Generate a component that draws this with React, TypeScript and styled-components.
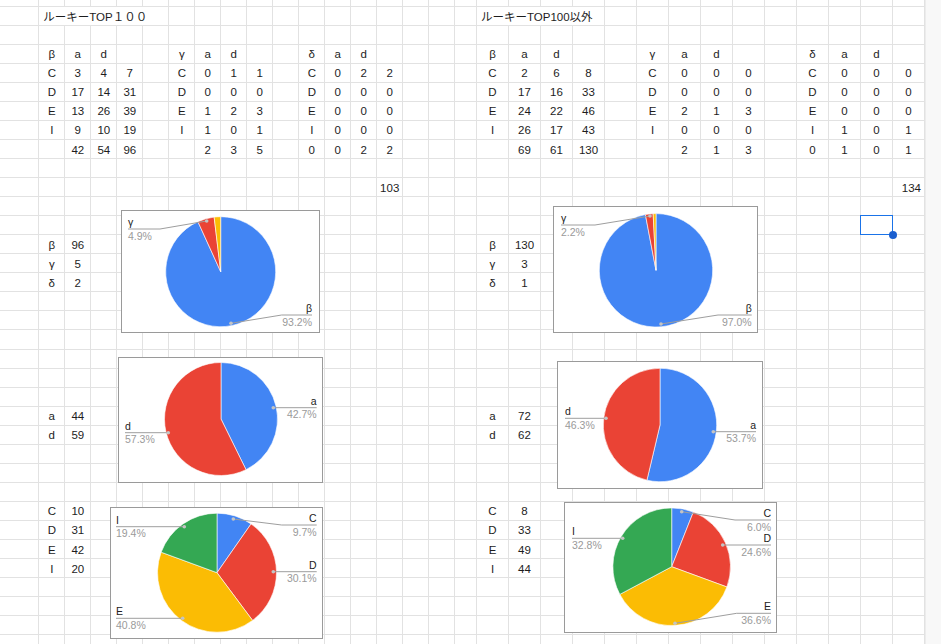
import React from 'react';
import styled, { createGlobalStyle } from 'styled-components';

const GlobalStyle = createGlobalStyle`
  html, body {
    margin: 0;
    padding: 0;
    background: #fff;
  }
  body {
    font-family: "Liberation Sans", Arial, "Noto Sans CJK JP", sans-serif;
  }
`;

const ROW_TOP = 6.7;
const ROW_H = 19.06;
const ROW_COUNT = 34;

const COLORS = {
  blue: '#4285f4',
  red: '#ea4335',
  yellow: '#fbbc04',
  green: '#34a853',
};

type Align = 'l' | 'c' | 'r';
type CellSpec = { t: string; a?: Align; span?: number; sel?: boolean };
type SheetData = Record<string, CellSpec>;

const Page = styled.div`
  position: relative;
  display: flex;
  width: 941px;
  height: 644px;
  overflow: hidden;
  background: #fff;
`;

const Pane = styled.div<{ $cols: string }>`
  flex: none;
  display: grid;
  grid-template-columns: ${(p) => p.$cols};
  grid-template-rows: ${ROW_TOP}px repeat(${ROW_COUNT}, ${ROW_H}px);
  align-content: start;
`;

const Cell = styled.div<{ $align: Align; $span: number; $sel?: boolean }>`
  grid-column: span ${(p) => p.$span};
  position: relative;
  box-sizing: border-box;
  min-height: 0;
  display: flex;
  align-items: center;
  justify-content: ${(p) => (p.$align === 'l' ? 'flex-start' : p.$align === 'r' ? 'flex-end' : 'center')};
  padding: 1px ${(p) => (p.$align === 'l' ? 4 : 3)}px 0;
  border-right: 1px solid #e2e2e2;
  border-bottom: 1px solid #e2e2e2;
  font-size: 11.5px;
  color: #1d1d1d;
  white-space: nowrap;

  ${(p) =>
    p.$sel &&
    `
    &::after {
      content: '';
      position: absolute;
      inset: -1px -1px -1px -1px;
      border: 1.5px solid #1a73e8;
    }
  `}
`;

const Handle = styled.span`
  position: absolute;
  right: -5px;
  bottom: -5px;
  width: 8px;
  height: 8px;
  border-radius: 50%;
  background: #1a5fcf;
  z-index: 2;
`;

const ScrollStrip = styled.div`
  flex: 1;
  background: #f8f8f8;
  border-left: 1px solid #ececec;
`;

const ChartFrame = styled.div<{ $x: number; $y: number; $w: number; $h: number }>`
  position: absolute;
  left: ${(p) => p.$x}px;
  top: ${(p) => p.$y}px;
  width: ${(p) => p.$w - 2}px;
  height: ${(p) => p.$h - 2}px;
  border: 1px solid #9a9a9a;
  background: #fff;

  svg {
    display: block;
  }
`;

const LabelName = styled.text`
  font-family: "Liberation Sans", Arial, sans-serif;
  font-size: 10.5px;
  fill: #222;
`;

const LabelPct = styled.text`
  font-family: "Liberation Sans", Arial, sans-serif;
  font-size: 10.5px;
  fill: #9a9a9a;
`;

/* ---------- sheet data ---------- */

const left: SheetData = {};
const right: SheetData = {};

function putRow(d: SheetData, r: number, c: number, vals: string[]) {
  vals.forEach((v, i) => {
    if (v !== '') d[`${r},${c + i}`] = { t: v };
  });
}

function putTable(d: SheetData, r: number, c: number, rows: string[][]) {
  rows.forEach((vals, i) => putRow(d, r + i, c, vals));
}

left['1,1'] = { t: 'ルーキーTOP１００', a: 'l', span: 5 };
putTable(left, 3, 1, [
  ['β', 'a', 'd', ''],
  ['C', '3', '4', '7'],
  ['D', '17', '14', '31'],
  ['E', '13', '26', '39'],
  ['I', '9', '10', '19'],
  ['', '42', '54', '96'],
]);
putTable(left, 3, 6, [
  ['γ', 'a', 'd', ''],
  ['C', '0', '1', '1'],
  ['D', '0', '0', '0'],
  ['E', '1', '2', '3'],
  ['I', '1', '0', '1'],
  ['', '2', '3', '5'],
]);
putTable(left, 3, 11, [
  ['δ', 'a', 'd', ''],
  ['C', '0', '2', '2'],
  ['D', '0', '0', '0'],
  ['E', '0', '0', '0'],
  ['I', '0', '0', '0'],
  ['0', '0', '2', '2'],
]);
left['10,14'] = { t: '103', a: 'r' };
putTable(left, 13, 1, [['β', '96'], ['γ', '5'], ['δ', '2']]);
putTable(left, 22, 1, [['a', '44'], ['d', '59']]);
putTable(left, 27, 1, [['C', '10'], ['D', '31'], ['E', '42'], ['I', '20']]);

right['1,0'] = { t: 'ルーキーTOP100以外', a: 'l', span: 4 };
putTable(right, 3, 0, [
  ['β', 'a', 'd', ''],
  ['C', '2', '6', '8'],
  ['D', '17', '16', '33'],
  ['E', '24', '22', '46'],
  ['I', '26', '17', '43'],
  ['', '69', '61', '130'],
]);
putTable(right, 3, 5, [
  ['γ', 'a', 'd', ''],
  ['C', '0', '0', '0'],
  ['D', '0', '0', '0'],
  ['E', '2', '1', '3'],
  ['I', '0', '0', '0'],
  ['', '2', '1', '3'],
]);
putTable(right, 3, 10, [
  ['δ', 'a', 'd', ''],
  ['C', '0', '0', '0'],
  ['D', '0', '0', '0'],
  ['E', '0', '0', '0'],
  ['I', '1', '0', '1'],
  ['0', '1', '0', '1'],
]);
right['10,13'] = { t: '134', a: 'r' };
right['12,12'] = { t: '', sel: true };
putTable(right, 13, 0, [['β', '130'], ['γ', '3'], ['δ', '1']]);
putTable(right, 22, 0, [['a', '72'], ['d', '62']]);
putTable(right, 27, 0, [['C', '8'], ['D', '33'], ['E', '49'], ['I', '44']]);

function SheetPane({ cols, colCount, data }: { cols: string; colCount: number; data: SheetData }) {
  const cells: React.ReactNode[] = [];
  for (let r = 0; r <= ROW_COUNT; r++) {
    for (let c = 0; c < colCount; ) {
      const spec = data[`${r},${c}`];
      const span = spec?.span ?? 1;
      cells.push(
        <Cell key={`${r}-${c}`} $span={span} $align={spec?.a ?? 'c'} $sel={spec?.sel}>
          {spec?.t}
          {spec?.sel && <Handle />}
        </Cell>
      );
      c += span;
    }
  }
  return <Pane $cols={cols}>{cells}</Pane>;
}

/* ---------- charts ---------- */

type Label = {
  name: string;
  pct: string;
  side: 'l' | 'r';
  textX: number;
  lineY: number;
  dot: [number, number];
  kinkX?: number;
};

type Chart = {
  box: [number, number, number, number];
  cx: number;
  cy: number;
  r: number;
  slices: { v: number; color: string }[];
  labels: Label[];
};

const charts: Chart[] = [
  {
    box: [121, 210, 199, 123],
    cx: 220.7,
    cy: 271.7,
    r: 55,
    slices: [
      { v: 93.2, color: COLORS.blue },
      { v: 4.9, color: COLORS.red },
      { v: 1.9, color: COLORS.yellow },
    ],
    labels: [
      { name: 'γ', pct: '4.9%', side: 'l', textX: 128, lineY: 229, kinkX: 160, dot: [206.7, 221] },
      { name: 'β', pct: '93.2%', side: 'r', textX: 312, lineY: 315, kinkX: 281.7, dot: [231, 323.3] },
    ],
  },
  {
    box: [118, 357, 205, 126],
    cx: 221,
    cy: 419,
    r: 56.5,
    slices: [
      { v: 42.7, color: COLORS.blue },
      { v: 57.3, color: COLORS.red },
    ],
    labels: [
      { name: 'a', pct: '42.7%', side: 'r', textX: 316.7, lineY: 407.7, dot: [273.3, 407.7] },
      { name: 'd', pct: '57.3%', side: 'l', textX: 125, lineY: 432.7, dot: [168.3, 432.7] },
    ],
  },
  {
    box: [110, 507, 213, 132],
    cx: 217,
    cy: 572.7,
    r: 59.5,
    slices: [
      { v: 9.7, color: COLORS.blue },
      { v: 30.1, color: COLORS.red },
      { v: 40.8, color: COLORS.yellow },
      { v: 19.4, color: COLORS.green },
    ],
    labels: [
      { name: 'C', pct: '9.7%', side: 'r', textX: 316.7, lineY: 525, kinkX: 281.7, dot: [233.3, 519] },
      { name: 'D', pct: '30.1%', side: 'r', textX: 316.7, lineY: 571.7, dot: [273.3, 571.7] },
      { name: 'I', pct: '19.4%', side: 'l', textX: 116, lineY: 526.7, dot: [184.3, 526.7] },
      { name: 'E', pct: '40.8%', side: 'l', textX: 116, lineY: 618.3, dot: [182.7, 618.3] },
    ],
  },
  {
    box: [553, 206, 205, 127],
    cx: 656,
    cy: 270.3,
    r: 56.7,
    slices: [
      { v: 97.0, color: COLORS.blue },
      { v: 2.2, color: COLORS.red },
      { v: 0.8, color: COLORS.yellow },
    ],
    labels: [
      { name: 'γ', pct: '2.2%', side: 'l', textX: 561, lineY: 225, kinkX: 595, dot: [650, 216] },
      { name: 'β', pct: '97.0%', side: 'r', textX: 751.7, lineY: 315, kinkX: 718, dot: [661, 324] },
    ],
  },
  {
    box: [557, 361, 206, 128],
    cx: 660,
    cy: 425,
    r: 56.7,
    slices: [
      { v: 53.7, color: COLORS.blue },
      { v: 46.3, color: COLORS.red },
    ],
    labels: [
      { name: 'd', pct: '46.3%', side: 'l', textX: 565, lineY: 418.3, dot: [606, 418.3] },
      { name: 'a', pct: '53.7%', side: 'r', textX: 756, lineY: 431.7, dot: [713.3, 431.7] },
    ],
  },
  {
    box: [564, 502, 213, 131],
    cx: 671.7,
    cy: 566.7,
    r: 58.8,
    slices: [
      { v: 6.0, color: COLORS.blue },
      { v: 24.6, color: COLORS.red },
      { v: 36.6, color: COLORS.yellow },
      { v: 32.8, color: COLORS.green },
    ],
    labels: [
      { name: 'C', pct: '6.0%', side: 'r', textX: 771, lineY: 520, kinkX: 735, dot: [681.7, 511.7] },
      { name: 'D', pct: '24.6%', side: 'r', textX: 771, lineY: 545, dot: [722.7, 545] },
      { name: 'I', pct: '32.8%', side: 'l', textX: 572, lineY: 538.3, dot: [622.7, 538.3] },
      { name: 'E', pct: '36.6%', side: 'r', textX: 771, lineY: 613.3, kinkX: 736.7, dot: [675, 623.3] },
    ],
  },
];

function slicePath(cx: number, cy: number, r: number, f0: number, f1: number) {
  const t0 = f0 * Math.PI * 2 - Math.PI / 2;
  const t1 = f1 * Math.PI * 2 - Math.PI / 2;
  const x0 = cx + r * Math.cos(t0);
  const y0 = cy + r * Math.sin(t0);
  const x1 = cx + r * Math.cos(t1);
  const y1 = cy + r * Math.sin(t1);
  const large = f1 - f0 > 0.5 ? 1 : 0;
  return `M${cx},${cy} L${x0},${y0} A${r},${r} 0 ${large} 1 ${x1},${y1} Z`;
}

function PieLabel({ l }: { l: Label }) {
  const kink = l.kinkX ?? l.dot[0];
  const anchor = l.side === 'r' ? 'end' : 'start';
  return (
    <g>
      <polyline
        points={`${l.dot[0]},${l.dot[1]} ${kink},${l.lineY} ${l.textX},${l.lineY}`}
        fill="none"
        stroke="#9e9e9e"
        strokeWidth={1}
      />
      <circle cx={l.dot[0]} cy={l.dot[1]} r={1.8} fill="#c4c4c4" />
      <LabelName x={l.textX} y={l.lineY - 3} textAnchor={anchor}>
        {l.name}
      </LabelName>
      <LabelPct x={l.textX} y={l.lineY + 10.5} textAnchor={anchor}>
        {l.pct}
      </LabelPct>
    </g>
  );
}

function PieChart({ chart }: { chart: Chart }) {
  const [x, y, w, h] = chart.box;
  const total = chart.slices.reduce((s, v) => s + v.v, 0);
  let acc = 0;
  return (
    <ChartFrame $x={x} $y={y} $w={w} $h={h}>
      <svg width={w - 2} height={h - 2} viewBox={`${x + 1} ${y + 1} ${w - 2} ${h - 2}`}>
        {chart.slices.map((s, i) => {
          const f0 = acc / total;
          acc += s.v;
          const f1 = acc / total;
          return (
            <path
              key={i}
              d={slicePath(chart.cx, chart.cy, chart.r, f0, f1)}
              fill={s.color}
              stroke="#fff"
              strokeWidth={0.6}
            />
          );
        })}
        {chart.labels.map((l, i) => (
          <PieLabel key={i} l={l} />
        ))}
      </svg>
    </ChartFrame>
  );
}

export default function App() {
  return (
    <>
      <GlobalStyle />
      <Page>
        <SheetPane cols="39.3px repeat(16, 26px) 21.7px" colCount={18} data={left} />
        <SheetPane cols="repeat(14, 32px)" colCount={14} data={right} />
        <ScrollStrip />
        {charts.map((c, i) => (
          <PieChart key={i} chart={c} />
        ))}
      </Page>
    </>
  );
}
